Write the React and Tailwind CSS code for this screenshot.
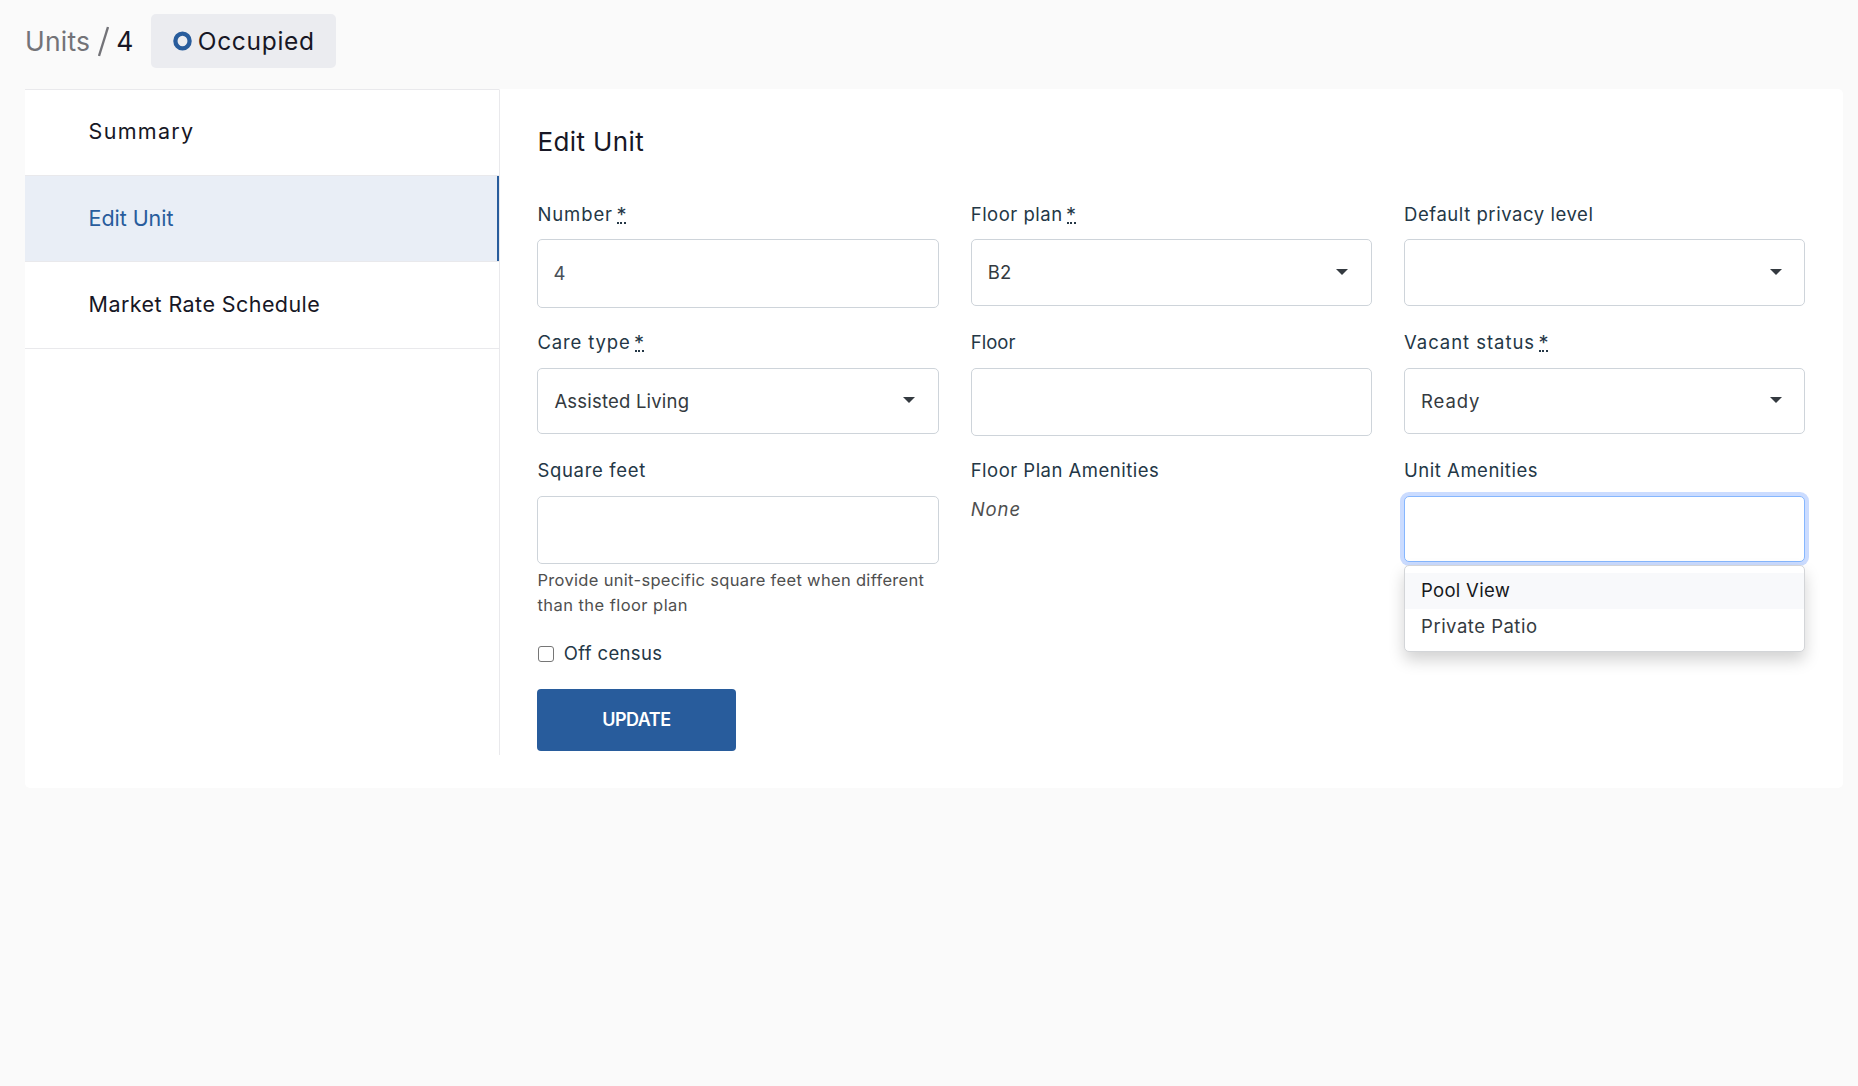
import React, { useState } from "react";

const navItems = [
  { label: "Summary", tracking: "tracking-[1.3px]" },
  { label: "Edit Unit", tracking: "tracking-[-0.06px]" },
  { label: "Market Rate Schedule", tracking: "tracking-[0.43px]" },
];

const amenities = [
  { label: "Pool View", tracking: "tracking-[0.29px]" },
  { label: "Private Patio", tracking: "tracking-[0.5px]" },
];

const Label = ({ children, required, tracking, htmlFor }) => (
  <label htmlFor={htmlFor} className="mb-[11.4px] flex h-7 items-center text-[18.5px] leading-7 text-[#243746]">
    <span className={tracking}>{children}</span>
    {required && (
      <abbr
        title="required"
        className="mb-[4px] ml-[4px] flex h-[23px] w-[9px] justify-center border-b-2 border-dotted border-[#243746] pt-[2px] text-[20px] leading-6 no-underline"
      >
        *
      </abbr>
    )}
  </label>
);

const TextField = ({ id, label, tracking, required, defaultValue, hint }) => (
  <div>
    <Label htmlFor={id} tracking={tracking} required={required}>
      {label}
    </Label>
    <input
      id={id}
      type="text"
      defaultValue={defaultValue}
      className="block h-[68.5px] w-full rounded-[5px] border border-[#ced4da] bg-white px-[15px] pb-[1px] text-[18.5px] text-[#495057] outline-none"
    />
    {hint}
  </div>
);

const SelectField = ({ label, tracking, required, value, valueTracking }) => (
  <div>
    <Label tracking={tracking} required={required}>
      {label}
    </Label>
    <button
      type="button"
      className="flex h-[66.5px] w-full items-center justify-between rounded-[5px] border border-[#ced4da] bg-white pl-4 pr-[22.6px] text-[18.5px] text-[#343a40]"
    >
      <span className={`pt-[1.4px] ${valueTracking || ""}`}>{value}</span>
      <svg width="12" height="6" viewBox="0 0 12 6" className="mb-0.5" fill="#343a40">
        <path d="M0 0h12L6 6z" />
      </svg>
    </button>
  </div>
);

const Sidebar = ({ active, onSelect }) => (
  <nav className="h-[666px] w-[475px] shrink-0 border-r border-t border-r-[#e9e9ec] border-t-transparent">
    <ul className="-mt-px border-t border-[#e9e9ec]">
      {navItems.map((item) => (
        <li key={item.label} className="border-b border-[#e9e9ec]">
          <button
            type="button"
            onClick={() => onSelect(item.label)}
            className={`flex h-[85.2px] w-full items-center border-r-2 pb-[2.2px] pl-[63.6px] text-left text-[21.5px] ${
              active === item.label
                ? "border-[#285c9c] bg-[#e9eef6] text-[#285c9c]"
                : "border-transparent text-[#171725]"
            }`}
          >
            <span className={item.tracking}>{item.label}</span>
          </button>
        </li>
      ))}
    </ul>
  </nav>
);

const App = () => {
  const [active, setActive] = useState("Edit Unit");
  const [offCensus, setOffCensus] = useState(false);

  return (
    <div className="min-h-screen bg-[#fafafa] pl-[25px] pr-[15px] pt-3.5 font-['Inter',sans-serif]">
      <header className="flex h-[54px] items-center text-[26.5px] leading-9 text-[#171725]">
        <span className="tracking-[0.2px] text-[#737378]">Units</span>
        <svg width="11" height="31" viewBox="0 0 11 31" className="ml-2" stroke="#737378" strokeWidth="2.4">
          <path d="M1 30 10 1" />
        </svg>
        <span className="ml-[7px] w-[18px]">4</span>
        <div className="ml-[17px] flex h-[54px] w-[185px] items-center rounded-[5px] bg-[#ebecf0] pl-[21.5px]">
          <svg width="19" height="20" viewBox="0 0 19 20" className="mb-px" fill="none" stroke="#285c9c">
            <ellipse cx="9.5" cy="10" rx="7.1" ry="7.4" strokeWidth="4.3" />
          </svg>
          <span className="ml-[6px] text-[24.5px] tracking-[0.7px]">Occupied</span>
        </div>
      </header>

      <main className="mt-[21px] flex h-[699px] rounded-[5px] rounded-tl-none bg-white">
        <Sidebar active={active} onSelect={setActive} />

        <section className="flex-1 pl-[37.4px] pr-[37.6px] pt-[34.5px]">
          <h1 className="mb-[40.5px] text-[26px] leading-9 tracking-[0.4px] text-[#171725]">Edit Unit</h1>

          <div className="grid grid-cols-3 items-start gap-x-8 gap-y-[20.3px]">
            <TextField id="number" label="Number" tracking="tracking-[0.9px]" required defaultValue="4" />
            <SelectField
              label="Floor plan"
              tracking="tracking-[0.5px]"
              required
              value="B2"
              valueTracking="tracking-[0.3px]"
            />
            <SelectField label="Default privacy level" tracking="tracking-[0.55px]" />

            <SelectField
              label="Care type"
              tracking="tracking-[0.85px]"
              required
              value="Assisted Living"
              valueTracking="tracking-[0.2px]"
            />
            <TextField id="floor" label="Floor" tracking="tracking-[0.05px]" />
            <SelectField
              label="Vacant status"
              tracking="tracking-[0.95px]"
              required
              value="Ready"
              valueTracking="tracking-[0.9px]"
            />

            <TextField
              id="squareFeet"
              label="Square feet"
              tracking="tracking-[0.68px]"
              hint={
                <p className="mt-[3.7px] text-[16.5px] leading-[25px] text-[#4f4f4f]">
                  <span className="block whitespace-nowrap tracking-[0.32px]">
                    Provide unit-specific square feet when different
                  </span>
                  <span className="block tracking-[0.45px]">than the floor plan</span>
                </p>
              }
            />
            <div>
              <Label tracking="tracking-[0.48px]">Floor Plan Amenities</Label>
              <p className="-mt-[0.8px] text-[18.5px] italic leading-7 tracking-[0.93px] text-[#4f4f4f]">None</p>
            </div>
            <div className="relative">
              <Label htmlFor="unitAmenities" tracking="tracking-[0.52px]">
                Unit Amenities
              </Label>
              <input
                id="unitAmenities"
                type="text"
                className="block h-[66.5px] w-full rounded-[5px] border border-[#86b7fe] bg-white px-4 text-[18.5px] outline-none ring-4 ring-[#cbdcff]"
              />
              {/* Amenity options, open below the focused field */}
              <ul className="absolute left-0 right-0 top-[108.8px] rounded-[5px] border border-[#d3d5d8] bg-white pb-[5.6px] pt-[7px] text-[18.5px] text-[#343a40] shadow-[0_8px_16px_rgba(0,0,0,0.18)]">
                {amenities.map((item, i) => (
                  <li
                    key={item.label}
                    className={`flex h-9 items-center pb-px pl-4 ${i === 0 ? "bg-[#f8f9fb] text-[#16181b]" : ""}`}
                  >
                    <span className={item.tracking}>{item.label}</span>
                  </li>
                ))}
              </ul>
            </div>
          </div>

          <label className="mt-[21.6px] flex h-7 items-center text-[18.5px] text-[#243746]">
            <input
              type="checkbox"
              checked={offCensus}
              onChange={(e) => setOffCensus(e.target.checked)}
              className="ml-[0.6px] h-4 w-4 appearance-none rounded-[3px] border border-[#767676] bg-white checked:bg-[#285c9c]"
            />
            <span className="ml-[9.8px] tracking-[0.35px]">Off census</span>
          </label>

          <button
            type="submit"
            className="mt-[21.2px] h-[62px] w-[199px] rounded bg-[#285c9c] pr-px pt-px text-lg font-semibold tracking-[-0.5px] text-white"
          >
            UPDATE
          </button>
        </section>
      </main>
    </div>
  );
};

export default App;
